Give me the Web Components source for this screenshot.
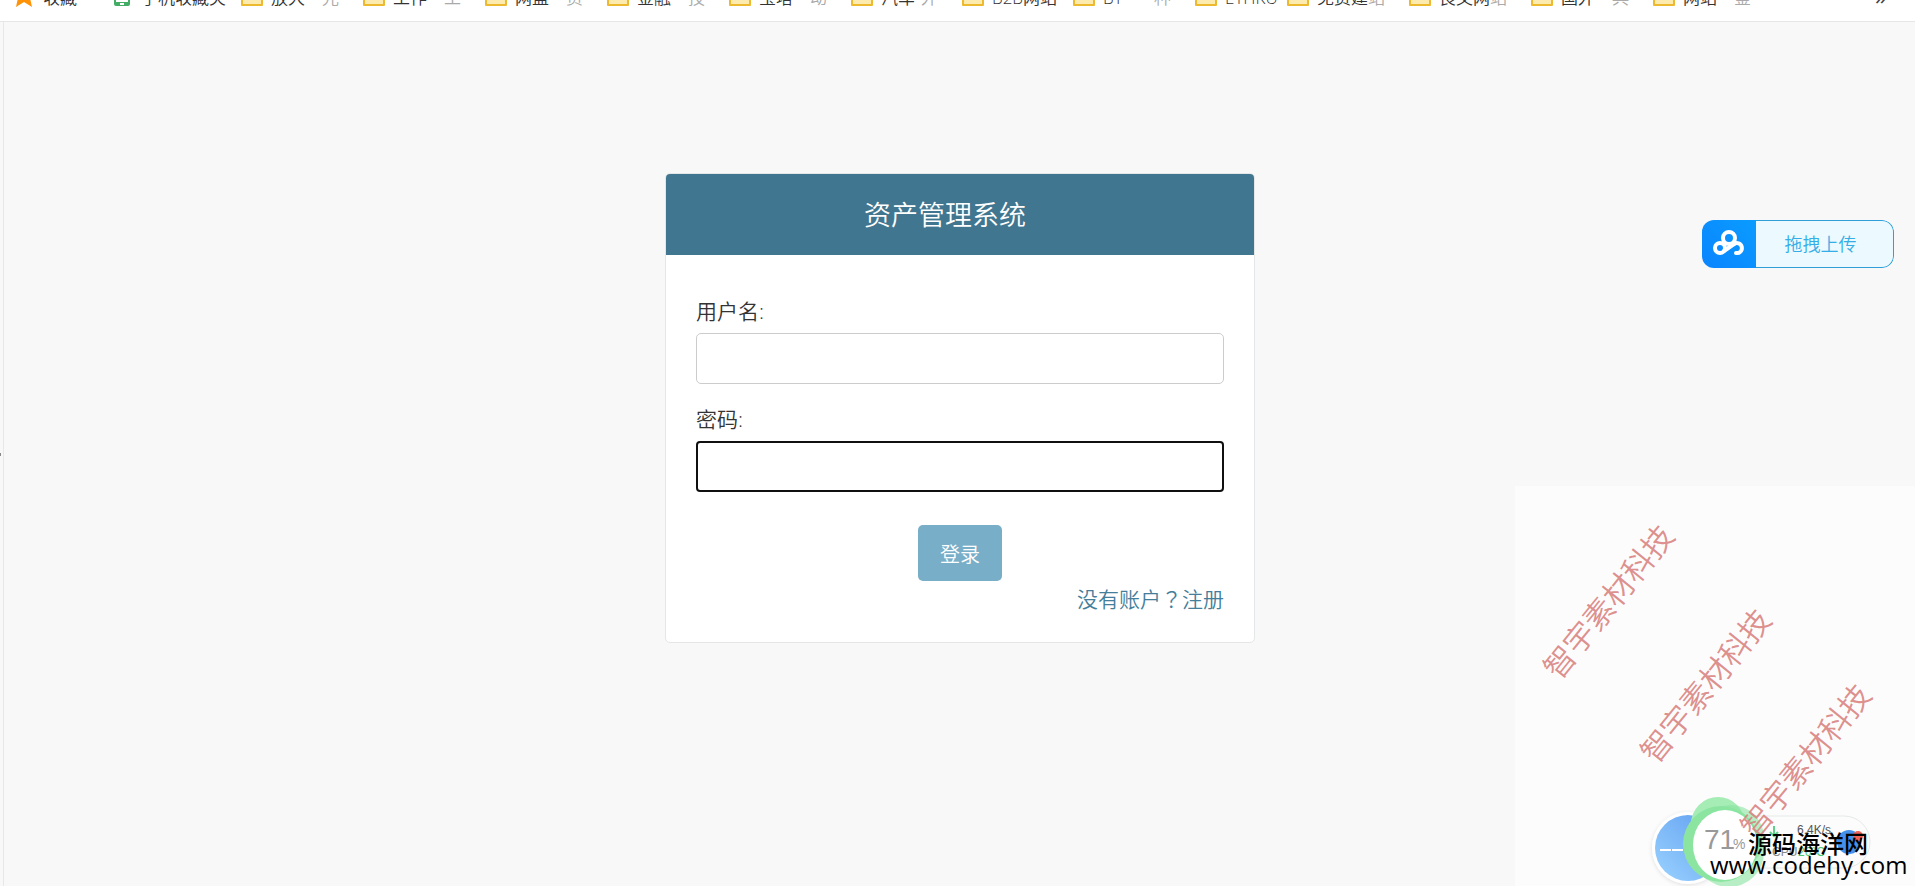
<!DOCTYPE html>
<html lang="zh-CN">
<head>
<meta charset="utf-8">
<title>资产管理系统</title>
<style>
  body {
    margin: 0;
    min-height: 100vh;
    display: flex;
    flex-direction: column;
    background: #f8f8f8;
    color: #333;
    font-family: 'Open Sans', 'Noto Sans CJK SC', sans-serif;
    font-weight: 350;
    overflow: hidden;
  }
  .mark {
    font-family: 'Noto Sans CJK TC', sans-serif;
  }
</style>
</head>
<body>
<bookmark-bar>
  <bookmark-item icon="star" size="wide">收藏</bookmark-item>
  <bookmark-item icon="phone" size="phone">手机收藏夹</bookmark-item>
  <bookmark-item>放大<span slot="tail">光</span></bookmark-item>
  <bookmark-item>工作<span slot="tail">工</span></bookmark-item>
  <bookmark-item>网盘<span slot="tail">资</span></bookmark-item>
  <bookmark-item>金融<span slot="tail">技</span></bookmark-item>
  <bookmark-item>宝塔<span slot="tail">动</span></bookmark-item>
  <bookmark-item size="medium">汽车<span slot="tail">外</span></bookmark-item>
  <bookmark-item size="medium">B2B网站</bookmark-item>
  <bookmark-item>BT<span slot="tail">种</span></bookmark-item>
  <bookmark-item size="small">ETHKU</bookmark-item>
  <bookmark-item>免费建<span slot="tail">站</span></bookmark-item>
  <bookmark-item>良文网<span slot="tail">站</span></bookmark-item>
  <bookmark-item>国外<span slot="tail">典</span></bookmark-item>
  <bookmark-item>网站<span slot="tail">鉴</span></bookmark-item>
</bookmark-bar>
<page-frame>
  <login-card heading="资产管理系统">
    <form-field label="用户名:" name="username" type="text"></form-field>
    <form-field label="密码:" name="password" type="password" active></form-field>
    <span slot="submit">登录</span>
    <span slot="link">没有账户<span class="mark" lang="zh-TW">？</span>注册</span>
  </login-card>
</page-frame>
<upload-button>拖拽上传</upload-button>
<corner-overlay></corner-overlay>

<script>
class BookmarkBar extends HTMLElement {
  constructor() {
    super();
    this.attachShadow({ mode: 'open' });
  }

  connectedCallback() {
    this.shadowRoot.innerHTML = /*html*/ `
      <style>
        :host {
          display: block;
          flex: none;
          background: #fff;
          border-bottom: 1px solid #e6e6e6;
        }
        nav {
          display: flex;
          align-items: flex-end;
          height: 21px;
          padding: 0 28px 0 13px;
          overflow: hidden;
        }
        button {
          margin: 0 0 9px auto;
          padding: 0;
          border: 0;
          background: none;
          color: #444;
          font: 24px/32px 'Open Sans', sans-serif;
        }
      </style>
      <nav>
        <slot></slot>
        <button aria-label="更多">»</button>
      </nav>
    `;
  }
}

class BookmarkItem extends HTMLElement {
  constructor() {
    super();
    this.attachShadow({ mode: 'open' });
  }

  icon() {
    if (this.getAttribute('icon') === 'star') {
      return `<path d="M11 0l3 8 8 1-5 5 2 9-8-5-8 5 2-9-5-5 8-1z" fill="#ff9206"/>`;
    }
    if (this.getAttribute('icon') === 'phone') {
      return `<rect x="3" y="0" width="16" height="22" rx="2" fill="#43ad66"/>
        <rect x="5" y="3" width="12" height="15" fill="#fff"/>
        <rect x="9" y="19" width="4" height="2" fill="#fff"/>`;
    }
    return `<path d="M1 3h8l2 3h10v15H1z" fill="#fdebae" stroke="#edb92e" stroke-width="2" stroke-linejoin="round"/>`;
  }

  connectedCallback() {
    this.shadowRoot.innerHTML = /*html*/ `
      <style>
        :host {
          display: block;
          box-sizing: border-box;
          flex: 0 0 122px;
          min-width: 0;
        }
        :host([size='wide']) { flex-basis: 98px; }
        :host([size='phone']) { flex-basis: 130px; }
        :host([size='medium']) { flex-basis: 111px; }
        :host([size='small']) { flex-basis: 92px; }
        a {
          display: flex;
          align-items: flex-end;
          gap: 8px;
          padding-right: 24px;
          color: #333;
          text-decoration: none;
          font-size: 17px;
          line-height: 24px;
          white-space: nowrap;
        }
        :host([size='small']) a,
        :host([size='phone']) a { padding-right: 0; }
        svg {
          flex: none;
          width: 22px;
          height: 22px;
          margin-bottom: 15px;
          overflow: visible;
        }
        .label {
          flex: 1;
          display: flex;
          justify-content: space-between;
          margin-bottom: 11px;
        }
        .tail { color: #aaa; }
      </style>
      <a href="#">
        <svg viewBox="0 0 22 22" aria-hidden="true">${ this.icon() }</svg>
        <span class="label"><span><slot></slot></span><span class="tail"><slot name="tail"></slot></span></span>
      </a>
    `;
  }
}

class PageFrame extends HTMLElement {
  constructor() {
    super();
    this.attachShadow({ mode: 'open' });
  }

  connectedCallback() {
    this.shadowRoot.innerHTML = /*html*/ `
      <style>
        :host {
          display: flex;
          flex: 1;
        }
        .gutter {
          display: flex;
          align-items: center;
          width: 3px;
          border-right: 1px solid #e8e8e8;
        }
        .gutter::before {
          content: '';
          width: 1px;
          height: 3px;
          background: #888;
        }
        main {
          flex: 1;
          display: flex;
          justify-content: center;
          align-items: flex-start;
          padding: 151px 0 40px 1px;
        }
      </style>
      <div class="gutter"></div>
      <main><slot></slot></main>
    `;
  }
}

class LoginCard extends HTMLElement {
  constructor() {
    super();
    this.attachShadow({ mode: 'open' });
  }

  connectedCallback() {
    this.shadowRoot.innerHTML = /*html*/ `
      <style>
        :host {
          display: block;
          box-sizing: border-box;
          width: 100%;
          max-width: 590px;
          background: #fff;
          border: 1px solid #e4e6e7;
          border-radius: 5px;
          overflow: hidden;
        }
        h1 {
          margin: 0;
          padding: 21px 30px 20px 0;
          background: #417690;
          color: #fff;
          font-size: 27px;
          font-weight: inherit;
          line-height: 40px;
          text-align: center;
        }
        form {
          display: flex;
          flex-direction: column;
          gap: 21px;
          padding: 42px 30px 26px;
        }
        .actions {
          display: flex;
          justify-content: center;
          margin-top: 12px;
        }
        button {
          height: 56px;
          padding: 0 22px;
          border: 0;
          border-radius: 5px;
          background: #79aec8;
          color: #fff;
          font: inherit;
          font-size: 20px;
          cursor: pointer;
        }
        .links {
          margin-top: -21px;
          text-align: right;
          font-size: 21px;
          line-height: 34px;
        }
        a {
          color: #447e9b;
          text-decoration: none;
        }
      </style>
      <h1>${ this.getAttribute('heading') }</h1>
      <form>
        <slot></slot>
        <div class="actions"><button type="submit"><slot name="submit"></slot></button></div>
        <div class="links"><a href="#"><slot name="link"></slot></a></div>
      </form>
    `;
    this.shadowRoot.querySelector('form').addEventListener('submit', e => e.preventDefault());
  }
}

class FormField extends HTMLElement {
  constructor() {
    super();
    this.attachShadow({ mode: 'open' });
  }

  connectedCallback() {
    const name = this.getAttribute('name');
    this.shadowRoot.innerHTML = /*html*/ `
      <style>
        :host {
          display: block;
        }
        label {
          display: block;
          margin-bottom: 8px;
          font-size: 21px;
          line-height: 28px;
        }
        input {
          display: block;
          box-sizing: border-box;
          width: 100%;
          height: 51px;
          padding: 0 10px;
          border: 1px solid #ccc;
          border-radius: 5px;
          background: #fff;
          color: #333;
          font: inherit;
          font-size: 20px;
        }
        input:focus,
        :host([active]) input {
          border: 2px solid #101010;
          border-radius: 4px;
          outline: none;
        }
      </style>
      <label for="${ name }">${ this.getAttribute('label') }</label>
      <input id="${ name }" name="${ name }" type="${ this.getAttribute('type') }">
    `;
  }
}

class UploadButton extends HTMLElement {
  constructor() {
    super();
    this.attachShadow({ mode: 'open' });
  }

  connectedCallback() {
    this.shadowRoot.innerHTML = /*html*/ `
      <style>
        :host {
          position: absolute;
          top: 220px;
          right: 21px;
        }
        button {
          display: flex;
          align-items: stretch;
          width: 192px;
          height: 48px;
          padding: 0;
          border: 0;
          border-radius: 12px;
          overflow: hidden;
          background: none;
          color: #35ade6;
          font: inherit;
          font-size: 18px;
        }
        svg {
          flex: none;
          width: 54px;
          height: 48px;
          background: linear-gradient(45deg, #0a84ff, #0a9cff);
        }
        span {
          flex: 1;
          display: flex;
          align-items: center;
          justify-content: center;
          padding: 0 8px 2px 0;
          border: 1px solid #2f9fda;
          border-left: 0;
          border-radius: 0 12px 12px 0;
          background: #ecf9ff;
        }
      </style>
      <button>
        <svg viewBox="0 0 54 48" fill="none" stroke="#fff" stroke-width="4" stroke-linecap="round" aria-hidden="true">
          <circle cx="27" cy="18" r="6"/>
          <circle cx="18" cy="28" r="5"/>
          <path d="M22 31l10-7"/>
          <path d="M32 24a5 5 0 1 1 2 9"/>
        </svg>
        <span><slot></slot></span>
      </button>
    `;
  }
}

class CornerOverlay extends HTMLElement {
  constructor() {
    super();
    this.attachShadow({ mode: 'open' });
  }

  connectedCallback() {
    this.shadowRoot.innerHTML = /*html*/ `
      <style>
        :host {
          position: absolute;
          right: 0;
          bottom: 0;
          background: #fcfcfc;
        }
        svg {
          display: block;
          width: 400px;
          height: 400px;
        }
        .mark {
          fill: #d9827f;
          fill-opacity: 0.9;
          font-family: KaiTi, 'AR PL UKai CN', 'Noto Sans CJK SC', serif;
          font-weight: 350;
          font-size: 31px;
          text-anchor: middle;
        }
        .sans { font-family: 'Liberation Sans', sans-serif; }
        .site {
          font-family: 'Open Sans', 'Noto Sans CJK SC', sans-serif;
          font-size: 24px;
          font-weight: 500;
        }
      </style>
      <svg viewBox="0 0 400 400">
        <defs>
          <linearGradient id="blue" x1="1" y1="0" x2="0" y2="1">
            <stop offset="0" stop-color="#5f9df0"/>
            <stop offset="1" stop-color="#9bd3ff"/>
          </linearGradient>
          <filter id="shadow" x="-20%" y="-20%" width="140%" height="140%">
            <feDropShadow dx="0" dy="1" stdDeviation="2" flood-opacity="0.12"/>
          </filter>
        </defs>

        <!-- speed pill -->
        <rect x="200" y="330" width="155" height="52" rx="26" fill="#fcfcfc" stroke="#e4eae6"/>
        <path d="M259 340v10M255 346l4 4 4-4" fill="none" stroke="#5fd08a" stroke-width="2"/>
        <text class="sans" x="282" y="348" font-size="12" fill="#555">6.4K/s</text>
        <text class="sans" x="257" y="370" font-size="12" fill="#888">CPU</text>
        <text class="sans" x="283" y="370" font-size="12" fill="#4cc774">26°C</text>
        <circle cx="334" cy="356" r="12" fill="#4590ec"/>
        <circle cx="343" cy="350" r="5" fill="#f06358"/>

        <!-- weather ball -->
        <circle cx="173" cy="362" r="36" fill="#fff" filter="url(#shadow)"/>
        <circle cx="173" cy="362" r="33" fill="url(#blue)"/>
        <path d="M145 364h11M157 364h11" stroke="#fff" stroke-width="2"/>

        <!-- memory ball -->
        <circle cx="203" cy="338" r="27" fill="#a5ecb5"/>
        <circle cx="206" cy="358" r="38" fill="#8be5a0"/>
        <circle cx="214" cy="366" r="35" fill="#8be5a0" opacity="0.6"/>
        <circle cx="216" cy="352" r="33" fill="#8be5a0" opacity="0.6"/>
        <ellipse cx="210" cy="359" rx="32" ry="35" fill="#fff"/>
        <text class="sans" x="189" y="363" font-size="28" fill="#999">71</text>
        <text class="sans" x="218" y="363" font-size="14" fill="#999">%</text>

        <text class="mark" transform="translate(94 116) rotate(-51)" dy="11">智宇素材科技</text>
        <text class="mark" transform="translate(191 200) rotate(-51)" dy="11">智宇素材科技</text>
        <text class="mark" transform="translate(291 275) rotate(-51)" dy="11">智宇素材科技</text>

        <text class="site" x="233" y="367">源码海洋网</text>
        <text class="site" x="195" y="388">www.codehy.com</text>
      </svg>
    `;
  }
}

customElements.define('bookmark-bar', BookmarkBar);
customElements.define('bookmark-item', BookmarkItem);
customElements.define('page-frame', PageFrame);
customElements.define('login-card', LoginCard);
customElements.define('form-field', FormField);
customElements.define('upload-button', UploadButton);
customElements.define('corner-overlay', CornerOverlay);
</script>
</body>
</html>
